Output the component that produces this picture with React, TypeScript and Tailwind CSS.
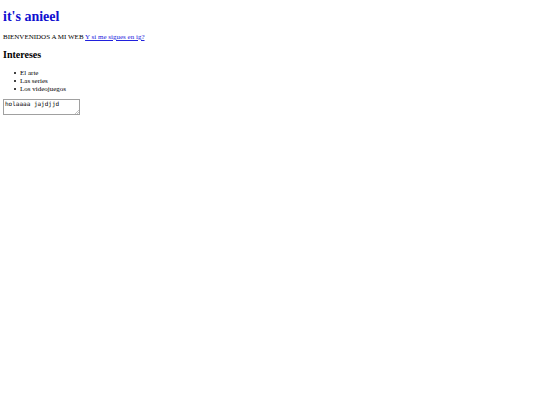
const intereses = ["El arte", "Las series", "Los videojuegos"];

export default function App() {
  return (
    <main className="min-h-screen bg-white px-[3px] py-2 font-['Liberation_Serif',serif] text-[7px] leading-[8px] text-black">
      <h1 className="text-[14px] leading-[18px] font-bold text-[#1010d0]">it's anieel</h1>

      <p className="mt-[7px]">
        BIENVENIDOS A MI WEB{" "}
        <a href="#ig" className="text-[#2020dd] underline">
          Y si me sigues en ig?
        </a>
      </p>

      <h2 className="mt-2 text-[10px] leading-[12px] font-bold">Intereses</h2>

      {/* Lista de intereses */}
      <ul className="mt-2 pl-[11px]">
        {intereses.map((interes) => (
          <li
            key={interes}
            className="flex items-center gap-1 before:size-[2px] before:rounded-full before:bg-black"
          >
            {interes}
          </li>
        ))}
      </ul>

      <div className="relative mt-[6px] h-4 w-[77px]">
        <textarea
          aria-label="Mensaje"
          defaultValue="holaaaa jajdjjd"
          className="block h-full w-full resize-none overflow-hidden border border-[#a0a0a0] bg-white px-px font-['DejaVu_Sans_Mono',monospace] text-[6px] leading-[7px]"
        />
        <svg
          viewBox="0 0 4 4"
          className="pointer-events-none absolute right-px bottom-px h-1 w-1"
          fill="none"
          stroke="#999999"
          strokeWidth="0.6"
          aria-hidden="true"
        >
          <path d="M0 4L4 0M2 4L4 2" />
        </svg>
      </div>
    </main>
  );
}
